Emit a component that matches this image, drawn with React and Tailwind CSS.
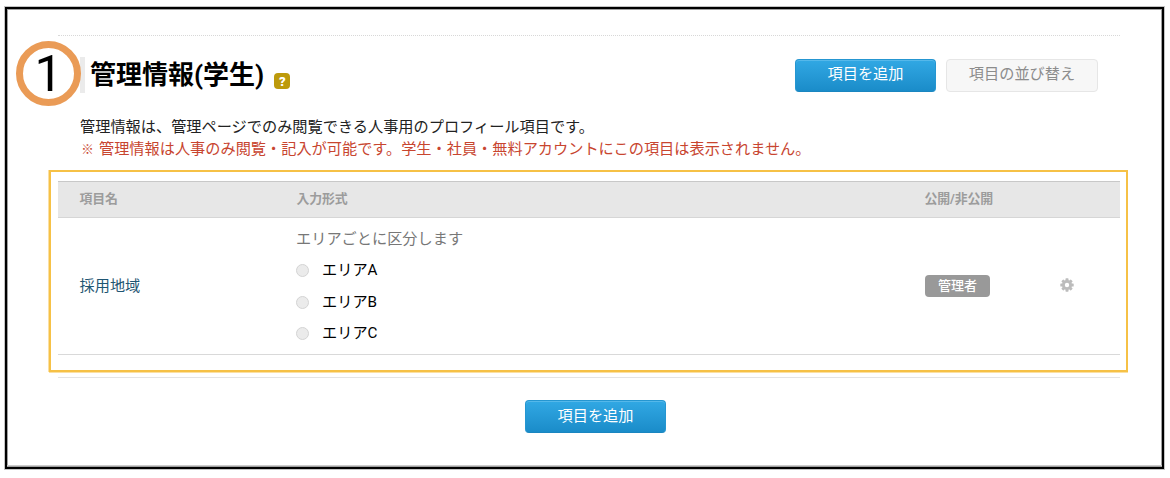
const Gear = () => (
  <svg width="14" height="14" viewBox="0 0 14 14" className="mb-[3px] block">
    <g fill="#bcbcbc">
      {[0, 45, 90, 135].map((a) => (
        <rect key={a} x="5.5" y="0.3" width="3" height="13.4" rx="0.6" transform={`rotate(${a} 7 7)`} />
      ))}
      <circle cx="7" cy="7" r="5" />
    </g>
    <circle cx="7" cy="7" r="2.2" fill="#fff" />
  </svg>
);

const AddButton = () => (
  <button className="flex h-[33px] w-[141px] items-center justify-center rounded-[4px] border border-[#2596d1] border-b-[#1a86c0] bg-linear-to-b from-[#31a8e4] to-[#1a8cc9] text-[15.2px] leading-none text-white shadow-[inset_0_1px_0_#55b8ea]">
    項目を追加
  </button>
);

const Option = ({ label }) => (
  <div className="flex h-[31.5px] items-center">
    <span className="size-[13px] rounded-full border border-[#d4d4d4] bg-[#ebebeb]" />
    <span className="ml-[13px] text-[15.2px] leading-none text-black">{label}</span>
  </div>
);

export default function App() {
  return (
    <div className="relative h-[478px] w-[1170px] overflow-hidden bg-white pt-[7px] pl-[5px] font-['Roboto','Noto_Sans_CJK_JP',sans-serif]">
      <div className="flex h-[462px] w-[1159px] flex-col border-2 border-black px-[41px] pt-[26px] shadow-[0_0_0_1px_#c4c4c4,inset_0_0_0_1px_#a0a0a0]">
        <div className="mx-[10px] w-[1062px] border-t border-dotted border-[#d8d8d8]" />
        <div className="mx-[10px] mt-[21px] flex h-[36px] w-[1062px] items-center">
          <span className="ml-[22px] h-[36px] w-[5px] bg-[#ebebeb]" />
          <h1 className="ml-[5px] text-[26px] leading-[36px] font-bold text-black">管理情報(学生)</h1>
          <span className="mt-[12px] ml-[10px] flex size-[16px] items-center justify-center rounded-[4px] bg-[#bd9a0b] text-[13px] leading-none font-black text-white">?</span>
          <div className="mr-[22px] ml-auto flex gap-[10px]">
            <AddButton />
            <button className="flex h-[33px] w-[152px] items-center justify-center rounded-[4px] border border-[#e6e6e6] bg-[#f7f7f7] text-[15.2px] leading-none text-[#8c8c8c]">
              項目の並び替え
            </button>
          </div>
        </div>
        <div className="mt-[23px] ml-[32px] h-[54px] text-[15.2px] leading-[22px] whitespace-nowrap text-[#222]">
          <p>管理情報は、管理ページでのみ閲覧できる人事用のプロフィール項目です。</p>
          <p className="text-[#c8452f]"><span className="inline-block w-[15.2px] text-center text-[12.5px]">※</span> 管理情報は人事のみ閲覧・記入が可能です。学生・社員・無料アカウントにこの項目は表示されません。</p>
        </div>
        <div className="ml-px h-[202px] w-[1079px] shrink-0 border-2 border-[#f6c146] pt-[9px] pl-[7px] shadow-[-1px_0_0_#fbe0a2,0_1px_0_#fbe0a2]">
          <div className="grid h-[37px] w-[1062px] grid-cols-[217px_628px_1fr] items-center border-y border-t-[#c8c8c8] border-b-[#d6d6d6] bg-[#e7e7e7] pl-[21.5px] text-[12.9px] leading-none font-bold tracking-[-0.1px] text-[#9c9c9c]">
            <span>項目名</span>
            <span>入力形式</span>
            <span>公開/非公開</span>
          </div>
          <div className="grid h-[137px] w-[1062px] grid-cols-[216.5px_629px_135px_1fr] items-center border-b border-[#d9d9d9] pl-[21.5px]">
            <span className="text-[15.2px] leading-none text-[#1f5673]">採用地域</span>
            <div className="flex h-[137px] flex-col pt-[13px]">
              <p className="mb-[7px] text-[15.2px] leading-[17px] text-[#777]">エリアごとに区分します</p>
              <Option label="エリアA" />
              <Option label="エリアB" />
              <Option label="エリアC" />
            </div>
            <span className="mb-[2px] flex h-[22px] w-[65px] items-center justify-center rounded-[4px] bg-[#999] text-[13px] leading-none font-medium text-white">管理者</span>
            <Gear />
          </div>
        </div>
        <div className="mt-[5px] ml-[10px] w-[1062px] border-t border-[#e4e4e4]" />
        <div className="mt-[22px] ml-[477px]">
          <AddButton />
        </div>
        <div className="-mx-[41px] mt-auto mb-[1px] border-t border-[#ccc]" />
      </div>
      <div className="absolute top-[41px] left-[16px] flex size-[65px] items-center justify-center rounded-full border-[7px] border-[#ea9b56] bg-white">
        <span className="text-[50px] leading-none text-black">1</span>
      </div>
    </div>
  );
}
